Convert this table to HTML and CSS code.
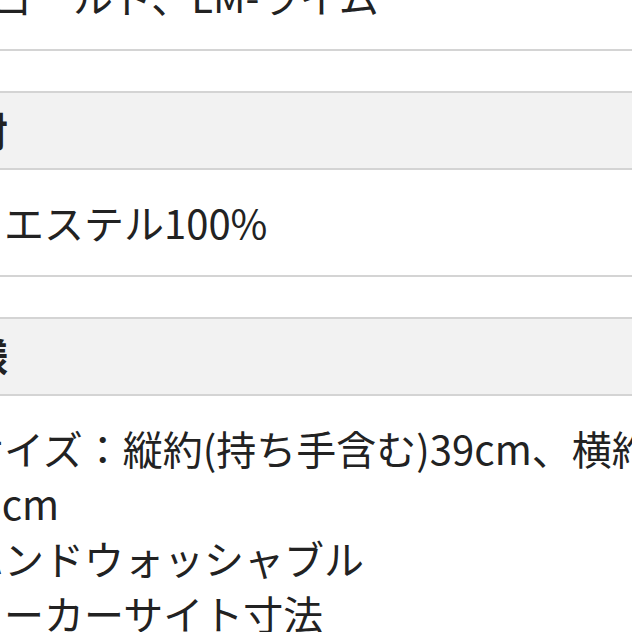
FILE: index.html
```html
<!DOCTYPE html>
<html lang="ja">
  <head>
    <meta charset="UTF-8" />
    <meta name="viewport" content="width=device-width, initial-scale=1.0" />
    <title>商品詳細</title>
    <link rel="stylesheet" href="styles.css">
  </head>
  <body>
    <div class="spec-list">
      <dl class="spec">
        <dt class="spec-title">カラー</dt>
        <dd class="spec-body">
          ・カラー：BK-ブラック、<br />GD-ゴールド、LM-ライム
        </dd>
      </dl>

      <dl class="spec">
        <dt class="spec-title">素材</dt>
        <dd class="spec-body">ポリエステル100%</dd>
      </dl>

      <dl class="spec">
        <dt class="spec-title">仕様</dt>
        <dd class="spec-body">
          ・サイズ：縦約(持ち手含む)39cm、横約40.5cm<br />
          ・ハンドウォッシャブル<br />
          ※メーカーサイト寸法
        </dd>
      </dl>
    </div>
  </body>
</html>
```

FILE: styles.css
```css
:root {
  --text: #222222;
  --line: #d4d4d4;
  --head-bg: #f2f2f2;
}

html,
body {
  margin: 0;
  overflow: hidden;
}

body {
  font-family: "Noto Sans CJK JP", sans-serif;
  font-size: 40px;
  line-height: 55px;
  color: var(--text);
  background-color: #ffffff;
}

/* the page is shown scrolled and zoomed, so the list starts off-screen */
.spec-list {
  width: 776px;
  margin: -190px 0 0 -76px;
  display: flex;
  flex-direction: column;
  gap: 40px;
}

.spec {
  margin: 0;
  border-top: 2px solid var(--line);
}

.spec-title {
  margin: 0;
  padding: 10px 0 10px 4px;
  font-weight: 700;
  background-color: var(--head-bg);
  border-bottom: 2px solid var(--line);
}

.spec-body {
  margin: 0;
  padding: 25px 0;
  border-bottom: 2px solid var(--line);
}
```
